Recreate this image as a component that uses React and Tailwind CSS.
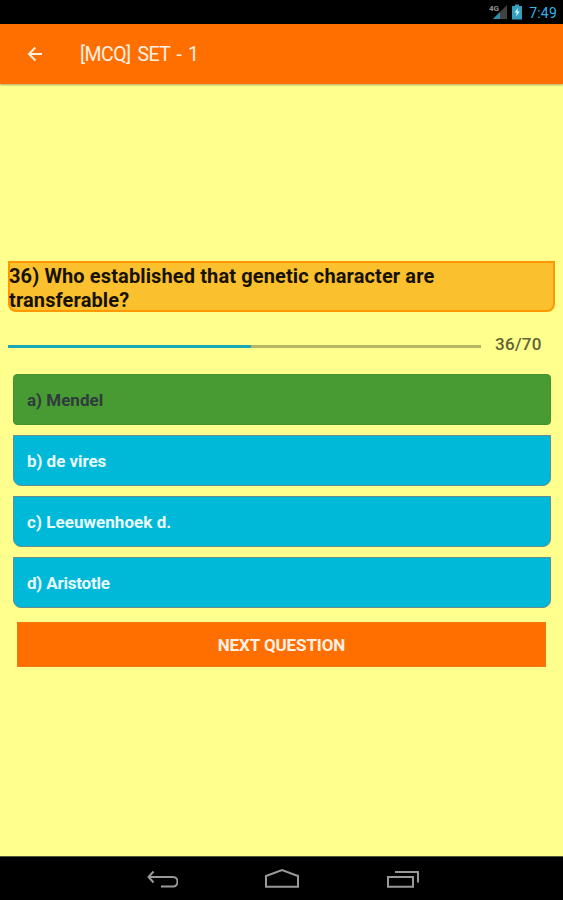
const choices = [
  { label: 'b) de vires', spacing: 'tracking-[-0.05px]' },
  { label: 'c) Leeuwenhoek d.', spacing: 'tracking-[0.05px]' },
  { label: 'd) Aristotle', spacing: 'tracking-[-0.2px]' },
];

function StatusBar() {
  return (
    <div className="flex h-6 shrink-0 items-center justify-end bg-black pr-[6px]">
      <svg className="mr-[5px]" width="20" height="20" viewBox="0 0 20 20">
        <path d="M20 3V17H6Z" fill="#424242" />
        <path d="M13 10V17H6Z" fill="#2b8dab" />
        <text x="2" y="8.5" fill="#929292" fontSize="8" fontFamily="Roboto, sans-serif" fontWeight="700">4G</text>
      </svg>
      <svg className="mr-[7px]" width="10" height="16" viewBox="0 0 10 16">
        <path d="M3 0.5H7V2H10V15.5H0V2H3Z" fill="#359fbe" />
        <path d="M6 4L2.5 8.5H4.8L4 12.5L7.8 7.5H5.4Z" fill="#d8f5fb" />
      </svg>
      <span className="pt-[2px] text-[14px] leading-6 tracking-[0.2px] text-[#33b5e5]">7:49</span>
    </div>
  );
}

function Header() {
  return (
    <header className="z-10 flex h-[60px] shrink-0 items-center bg-[#ff6f00] shadow-[0_1px_2px_rgba(0,0,0,0.35)]">
      <svg className="ml-[27px] mr-[37px]" width="16" height="16" viewBox="0 0 16 16" fill="none" stroke="#fff0e5" strokeWidth="1.9">
        <path d="M15 8H2M8.4 1.5L1.9 8L8.4 14.5" />
      </svg>
      <h1 className="pt-[2px] text-[19.5px] font-normal tracking-[-0.55px] [word-spacing:2.4px] text-[#fff0e5]">[MCQ] SET - 1</h1>
    </header>
  );
}

function NavigationBar() {
  return (
    <nav className="flex h-11 shrink-0 justify-center gap-[87px] border-t border-[#55552f] bg-black pt-[11px] text-[#999]">
      <svg width="34" height="22" viewBox="0 0 34 22" fill="none" stroke="currentColor" strokeWidth="2">
        <path d="M9.5 3.5L4.5 9L9.5 14.5M5 9H29C35 9 35 18.5 29 18.5H17" />
      </svg>
      <svg width="34" height="22" viewBox="0 0 34 22" fill="none" stroke="currentColor" strokeWidth="2">
        <path d="M1 18.7V8L17 2L33 8V18.7Z" />
      </svg>
      <svg width="34" height="22" viewBox="0 0 34 22" fill="none" stroke="currentColor" strokeWidth="2">
        <path d="M2 9H27V18.7H2ZM9 4H32V14.5" />
      </svg>
    </nav>
  );
}

export default function App() {
  return (
    <div className="flex h-[900px] w-[563px] flex-col overflow-hidden bg-[#ffff8d] font-[Roboto,sans-serif]">
      <StatusBar />
      <Header />
      <main className="flex-1 pt-[177px]">
        <h2 className="ml-2 h-[51px] w-[547px] rounded-b-[8px] border-2 border-[#ff9800] bg-[#fbc02d] pt-px text-[20px] leading-6 font-bold tracking-[0.12px] text-[#171200]">
          <span className="-ml-px block whitespace-pre-line">{'36) Who established that genetic character are\ntransferable?'}</span>
        </h2>
        <div className="mt-[20px] flex h-6 items-center pl-2">
          <div className="mt-[5px] h-[3px] w-[473px] bg-[#b5b564]">
            <div className="h-full w-[243px] bg-[#18a8b8]" />
          </div>
          <span className="ml-[14px] pt-[2px] text-[17px] font-medium tracking-[0.3px] text-[#626236]">36/70</span>
        </div>
        <div className="mx-[13px] mt-[18px] flex flex-col gap-[10px] text-[17px] font-bold">
          <button className="h-[51px] w-[538px] rounded-[4px] border border-[#439130] bg-[#489b33] pt-[2px] pl-[13px] text-left text-[#303b3c]">
            a) Mendel
          </button>
          {choices.map((choice) => (
            <button
              key={choice.label}
              className={`h-[51px] w-[538px] rounded-b-[8px] border border-[#698b91] bg-[#00b8d8] pt-[2px] pl-[13px] text-left text-[#e8fbff] ${choice.spacing}`}
            >
              {choice.label}
            </button>
          ))}
        </div>
        <button className="ml-[17px] mt-[14px] h-[45px] w-[529px] border border-[#f07910] bg-[#ff6f00] pt-[2px] text-[17px] font-bold tracking-[-0.1px] text-[#fff0e5]">
          NEXT QUESTION
        </button>
      </main>
      <NavigationBar />
    </div>
  );
}
